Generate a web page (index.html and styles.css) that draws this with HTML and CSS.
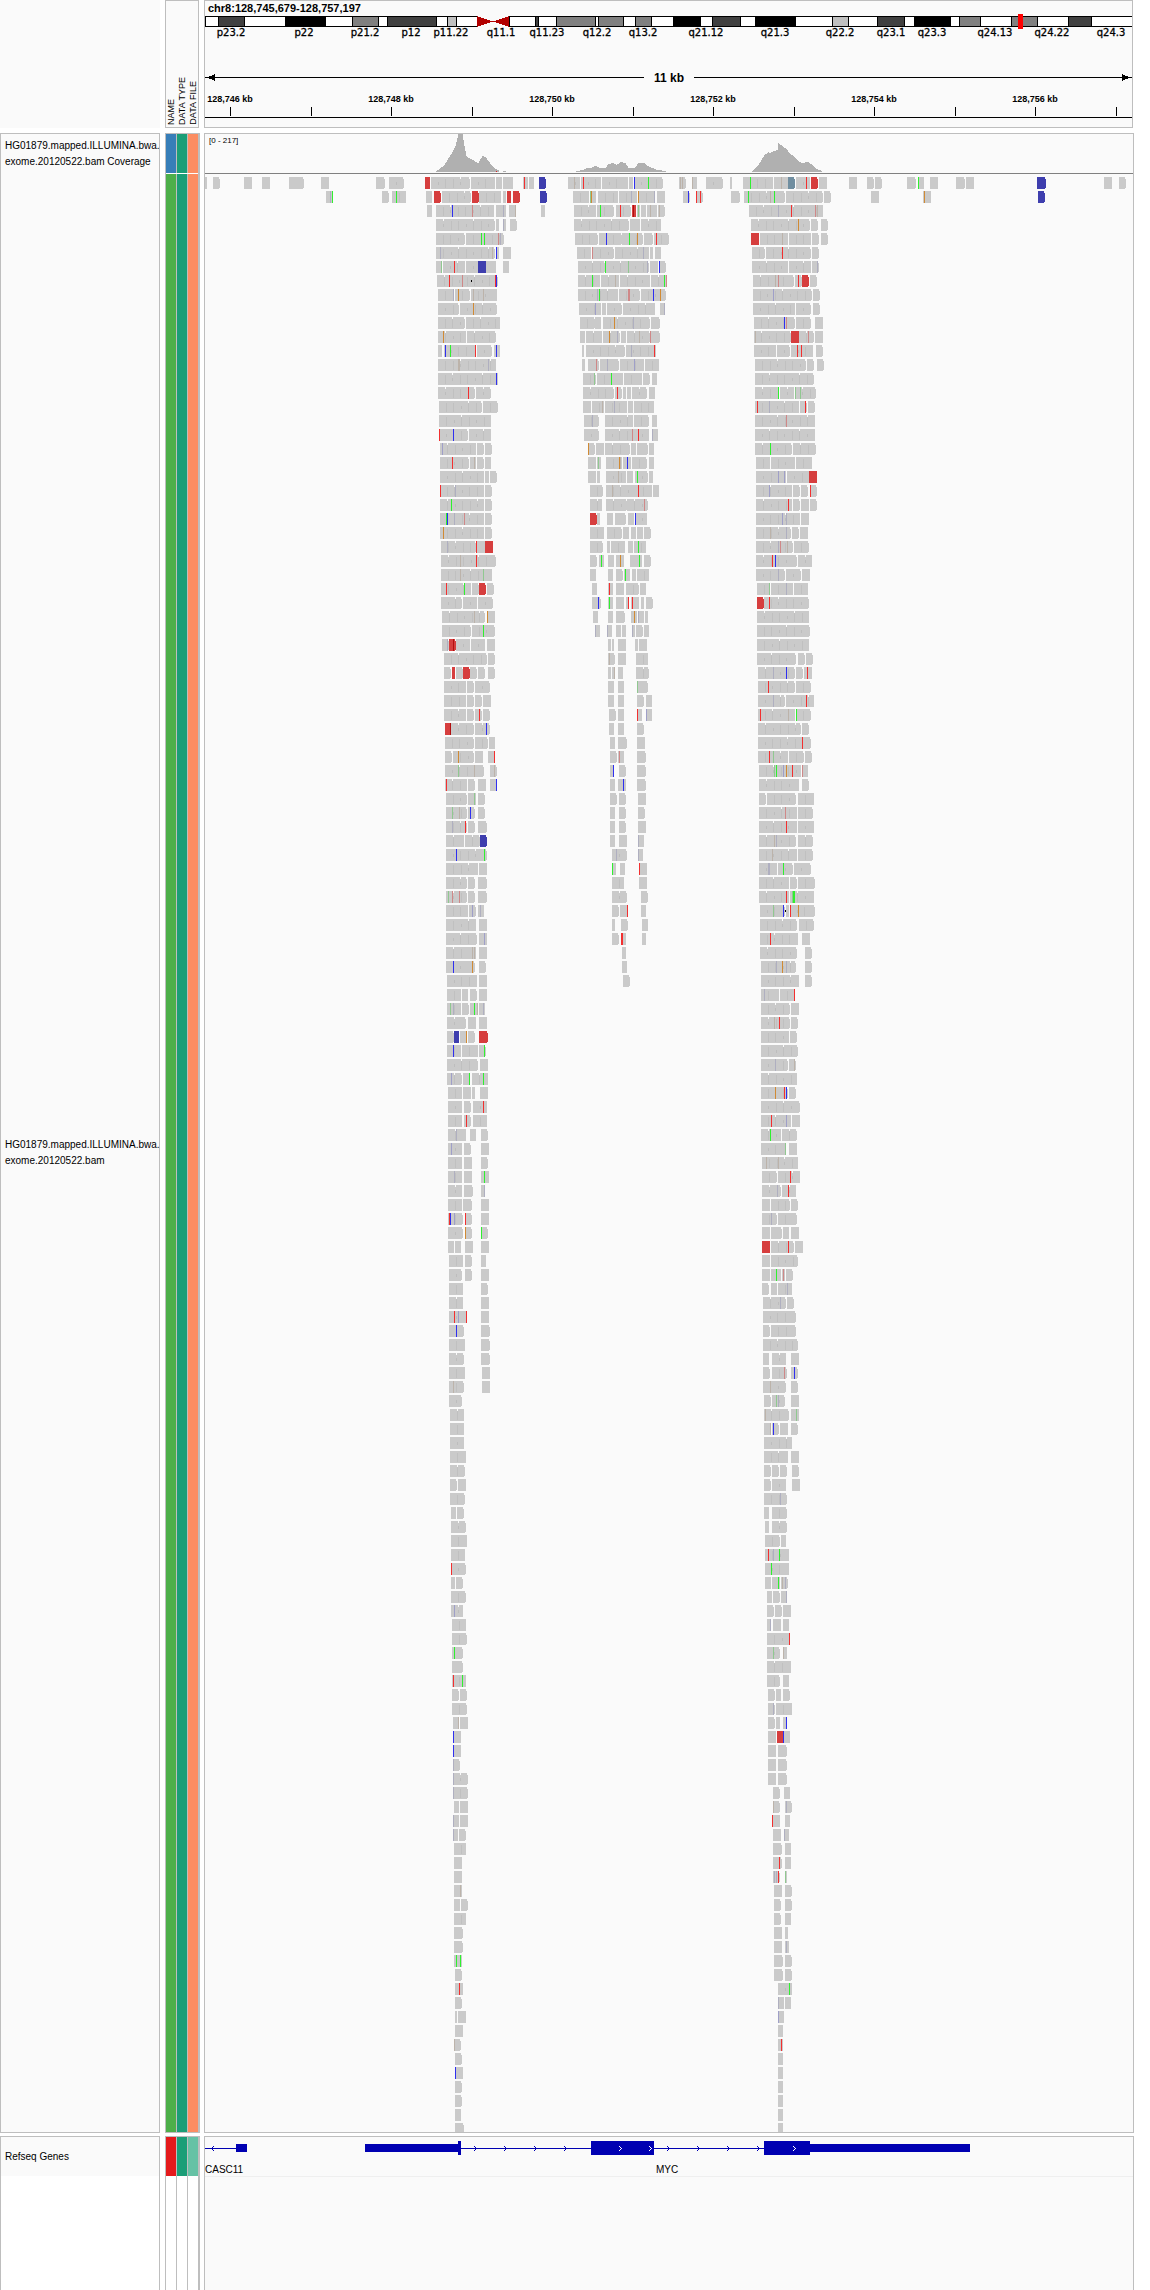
FILE: index.html
```html
<!DOCTYPE html>
<html lang="en">
<head>
<meta charset="utf-8">
<title>chr8:128,745,679-128,757,197</title>
<link rel="stylesheet" href="styles.css">
</head>
<body>
<main class="browser">
  <section class="band band-header">
    <div class="corner"></div>
    <div class="attr-heads">
      <span class="attr-head">NAME</span>
      <span class="attr-head">DATA TYPE</span>
      <span class="attr-head">DATA FILE</span>
    </div>
    <div class="panel header-panel">
      <svg class="canvas header-canvas" id="header" role="img" aria-label="Chromosome 8 ideogram and ruler"></svg>
    </div>
  </section>

  <section class="band band-data">
    <div class="panel names">
      <div class="name coverage-height">HG01879.mapped.ILLUMINA.bwa.<br>exome.20120522.bam Coverage</div>
      <div class="name reads-height">HG01879.mapped.ILLUMINA.bwa.<br>exome.20120522.bam</div>
    </div>
    <div class="attrs">
      <div class="attr-row coverage-height"><i class="swatch blue"></i><i class="swatch teal"></i><i class="swatch coral"></i></div>
      <div class="attr-row reads-height"><i class="swatch green"></i><i class="swatch teal"></i><i class="swatch coral"></i></div>
    </div>
    <div class="panel tracks">
      <svg class="canvas coverage-height" id="coverage" role="img" aria-label="Coverage"></svg>
      <svg class="canvas reads-height" id="reads" role="img" aria-label="Alignments"></svg>
    </div>
  </section>

  <section class="band band-genes">
    <div class="panel names open">
      <div class="name gene-height">Refseq Genes</div>
    </div>
    <div class="attrs open">
      <div class="attr-row gene-height"><i class="swatch red"></i><i class="swatch teal"></i><i class="swatch mint"></i></div>
      <div class="attr-row rest"><i class="swatch"></i><i class="swatch"></i><i class="swatch"></i></div>
    </div>
    <div class="panel tracks open">
      <svg class="canvas gene-height" id="genes" role="img" aria-label="Refseq Genes"></svg>
    </div>
  </section>
</main>
<script src="script.js"></script>
</body>
</html>
```
FILE: styles.css
```css
* { box-sizing: border-box; }

body {
  margin: 0;
  background: #fff;
  color: #000;
  font: 10px/16px "Liberation Sans", Arial, sans-serif;
}

.browser {
  display: flex;
  flex-direction: column;
  min-height: 100vh;
  padding-right: 16px;
}

.band {
  display: grid;
  grid-template-columns: 160px 34px minmax(0, 1fr);
  column-gap: 5px;
}

.band-header { height: 128px; margin-bottom: 5px; padding-right: 1px; }
.band-data { margin-bottom: 3px; }
.band-genes { flex: 1; min-height: 150px; }

.corner { background: #fafafa; }

.panel {
  border: 1px solid #bebebe;
  background: #fafafa;
}

.open { border-bottom: 0; }
.names.open { background: #fff; }

.attr-heads {
  display: flex;
  justify-content: space-around;
  align-items: flex-end;
  padding-bottom: 2px;
  border: 1px solid #bebebe;
  background: #fafafa;
}

.attr-head {
  writing-mode: vertical-rl;
  transform: rotate(180deg);
  font-size: 9px;
  line-height: 10px;
  white-space: nowrap;
}

.coverage-height { height: 40px; }
.reads-height { height: 1958px; }
.gene-height { height: 39px; }

.name {
  display: flex;
  align-items: center;
  padding-left: 4px;
  background: #fafafa;
  white-space: nowrap;
}

.attrs {
  position: relative;
  display: flex;
  flex-direction: column;
  margin-right: -1px;
  border: 1px solid #bebebe;
  border-right-width: 2px;
  background: #bebebe;
}
.attrs.open { border-bottom: 0; }

.attr-row { display: flex; gap: 1px; }
.attr-row.coverage-height { border-bottom: 1px solid #fff; }
.rest { flex: 1; }

.swatch { flex: 1; background: #fff; }
.blue { background: #377eb8; }
.green { background: #4daf4a; }
.teal { background: #1b9e77; }
.coral { background: #fc8d62; }
.red { background: #e41a1c; }
.mint { background: #66c2a5; }

.canvas { display: block; width: 100%; }
.header-canvas { height: 126px; }
#coverage { border-bottom: 1px solid #808080; }
#genes { height: 40px; border-bottom: 1px solid #efefef; }

.locus { font-size: 11px; font-weight: bold; }
.cytoband { font-family: "DejaVu Sans", sans-serif; font-size: 10px; stroke: #000; stroke-width: 0.3px; }
.span-label { font-size: 12px; font-weight: bold; }
.tick-label { font-size: 9px; font-weight: bold; }
.range { font-size: 8px; }
```
FILE: script.js
```js
var NS = 'http://www.w3.org/2000/svg';
var LEFT = 205;

// Each track has a stretched layer for shapes, and text placed by percentage.
function track(id, width, height) {
  var svg = document.getElementById(id);
  var layer = document.createElementNS(NS, 'svg');
  layer.setAttribute('viewBox', LEFT + ' 0 ' + width + ' ' + height);
  layer.setAttribute('preserveAspectRatio', 'none');
  layer.setAttribute('width', '100%');
  layer.setAttribute('height', height);
  layer.setAttribute('shape-rendering', 'crispEdges');
  svg.appendChild(layer);
  return {
    rect: function (x, y, w, h, fill) {
      var r = document.createElementNS(NS, 'rect');
      r.setAttribute('x', x); r.setAttribute('y', y);
      r.setAttribute('width', w); r.setAttribute('height', h);
      r.setAttribute('fill', fill);
      layer.appendChild(r);
    },
    poly: function (points, fill) {
      var p = document.createElementNS(NS, 'polygon');
      p.setAttribute('points', points); p.setAttribute('fill', fill);
      layer.appendChild(p);
    },
    text: function (x, y, label, cls, anchor) {
      var t = document.createElementNS(NS, 'text');
      t.setAttribute('x', ((x - LEFT) / width * 100) + '%');
      t.setAttribute('y', y);
      t.setAttribute('class', cls);
      t.setAttribute('text-anchor', anchor || 'middle');
      t.textContent = label;
      svg.appendChild(t);
    }
  };
}

// Ideogram and ruler
var head = track('header', 927, 126);
head.text(208, 11, 'chr8:128,745,679-128,757,197', 'locus', 'start');
head.rect(205, 15, 927, 11, '#000');
head.rect(206, 16, 926, 9, '#fff');
[[218, 245, '#404040'], [285, 326, '#000'], [352, 379, '#808080'], [387, 437, '#404040'],
 [447, 457, '#c0c0c0'], [535, 539, '#404040'], [556, 596, '#808080'], [598, 624, '#808080'],
 [635, 652, '#808080'], [673, 701, '#000'], [712, 741, '#404040'], [755, 796, '#000'],
 [832, 849, '#c0c0c0'], [877, 905, '#404040'], [914, 951, '#000'], [959, 981, '#808080'],
 [1011, 1038, '#808080'], [1068, 1092, '#404040']].forEach(function (b) {
  head.rect(b[0], 15, b[1] - b[0], 11, '#000');
  head.rect(b[0] + 1, 16, b[1] - b[0] - 2, 9, b[2]);
});
head.rect(477, 15, 33, 11, '#fafafa');
head.poly('477,15 493,20.5 477,26', '#b20000');
head.poly('509,15 493,20.5 509,26', '#b20000');
head.rect(509, 15, 1, 11, '#000');
head.rect(1018, 13, 5, 15, '#f00');
[[231, 'p23.2'], [304, 'p22'], [365, 'p21.2'], [411, 'p12'], [451, 'p11.22'], [501, 'q11.1'],
 [547, 'q11.23'], [597, 'q12.2'], [643, 'q13.2'], [706, 'q21.12'], [775, 'q21.3'], [840, 'q22.2'],
 [891, 'q23.1'], [932, 'q23.3'], [995, 'q24.13'], [1052, 'q24.22'], [1111, 'q24.3']].forEach(function (l) {
  head.text(l[0], 35, l[1], 'cytoband');
});
head.rect(205, 76, 439, 1, '#000');
head.rect(694, 76, 438, 1, '#000');
head.poly('207,76.5 215,73 215,80', '#000');
head.poly('1130,76.5 1122,73 1122,80', '#000');
head.text(669, 81, '11 kb', 'span-label');
[230, 311, 391, 472, 552, 633, 713, 794, 874, 955, 1035, 1116].forEach(function (x, i) {
  head.rect(x, 106, 1, 9, '#000');
  if (i % 2 === 0) head.text(x, 101, '128,' + (746 + i) + ' kb', 'tick-label');
});
head.rect(205, 116, 927, 1, '#000');

// Coverage
var cov = track('coverage', 928, 39);
cov.text(209, 9, '[0 - 217]', 'range', 'start');
['436,37 440,34 444,31 448,24 452,18 455,12 457,4 458,0 462,0 464,12 466,22 468,24 471,25 474,27 478,29 480,25 482,22 485,23 488,27 491,31 494,34 499,37',
 '576,37 582,36 586,34 590,34 595,32 600,34 605,34 608,30 613,29 616,31 620,28 625,29 628,34 634,34 638,29 644,29 647,32 652,34 657,36 666,37',
 '752,37 757,32 761,26 764,21 768,18 770,19 773,17 777,16 778,9 782,12 786,15 789,19 793,22 797,26 801,29 808,28 812,31 816,35 822,37'].forEach(function (s) {
  var pts = s.split(' ').map(function (p) { return p.split(',').map(Number); });
  for (var i = 1; i < pts.length; i++) {
    var a = pts[i - 1], b = pts[i];
    for (var x = a[0]; x < b[0]; x++) {
      var y = Math.round(a[1] + (b[1] - a[1]) * (x - a[0]) / (b[0] - a[0]));
      cov.rect(x, y, 1, 38 - y, '#b0b0b0');
    }
  }
});
cov.rect(496, 37, 1, 1, '#e02020');
cov.rect(503, 37, 3, 1, '#b0b0b0');

// Alignments. Blocks are "start-end" with an optional colour; a letter before a number is a mismatch.
var BLOCK = { R: '#d63e3e', B: '#3e3eae', S: '#708ea0' };
var MARK = { r: '#f23030', d: '#b01010', g: '#30f030', G: '#90c890', b: '#3030f0', B: '#9f9fc8',
  o: '#d08a34', t: '#bcb3aa', p: '#cf8888', l: '#afafc0', k: '#000' };
var READS = [
{ row: 0, x: 205, rows: `0-2 8-15 39-47 57-65 84-92 92-99 116-124 171-180 184-199
121-127 127-128 177-184 187-201 l125 g127 g191` },
{ row: 0, x: 420, rows: `5-10R 11-50 51-75 76-82 83-93 103-108 109-114 119-126B r104
6-12 14-21R 22-51 52-59R 59-81 83-86 87-91R 93-100R 120-127B
7-12 16-74 76-86 89-96 121-125 b32 p52 l83 t95
16-75 76-79 83-86 90-97 l83
16-45 46-64 65-84 g61 g64 p78 l80
16-75 76-79 83-91 l20 t72 b76
16-22 23-45 46-58 58-66B 66-76 83-89 G21 r34
17-78 r29 p42 k51 r75 b76
18-34 35-50 51-77 l33 o38 t53 t63
18-39 40-77 o53
18-45 46-80
18-46 47-76 o23
18-22 24-56 57-72 74-80 b25 g30 r55 b76
18-76 t38 t39 l68
18-78 b76
18-55 56-71 r48
19-62 63-78
19-71
19-48 49-71 r19 b33
20-56 57-64 65-72 B22
20-49 50-56 57-64 65-71 r32 t54
20-64 65-69 70-77
20-64 65-72 r20 l35
20-64 65-72 g31
20-64 65-72 g26 b27 l34 p44
20-64 65-72 o23
21-56 57-65 65-73R l27 r56
21-76 t40 r56
21-64 64-72 t40 G63
21-51 52-59 59-66R 67-74 r26 g44
21-42 43-57 58-73
22-65 67-75 t54 o67
22-51 52-75 g63
22-29 29-36R 36-50 51-65 67-75 l27 d33
24-67 68-75
24-31 32-35R 36-43 43-50R 50-57 58-65 68-75
24-46 47-54 55-70
24-46 47-54 55-62 63-71
24-46 47-54 55-62 63-70 r59
25-31R 31-54 55-70 d30 b66
25-54 55-68 69-75
25-32 33-54 55-63 68-75 o38 r74
25-64 70-77 G38 t54 t74
25-47 48-55 58-66 70-77 r26 b76
26-47 48-56 58-65 G54
26-47 48-55 58-65 G32 t39 b50
26-47 48-55 58-67 l32 r45
26-44 45-60 60-67B
26-67 b36 g64
26-58 59-67
26-47 48-55 58-67
26-47 48-55 58-67 G28 p32 p39
26-48 49-56 58-64 B52 l60
26-56 59-67
26-57 59-67 B64
26-48 48-56 59-67 t52 t54
26-48 48-55 59-66 b33 o52` },
{ row: 57, x: 430, rows: `17-47 49-57
17-31 32-38 40-47 49-57
17-31 32-39 40-48 49-55 G20 l23 g44 t47 l53
17-36 38-46 49-57
17-24 24-29B 30-37 38-45 49-58R o36
17-31 32-48 49-56 b23 g54
17-48 50-58
17-32 33-40 42-58 B21 g39 g53
18-32 33-41 42-45 50-58
18-32 34-41 43-57 r53
18-32 34-41 43-57 r36
18-36 40-46 51-58 l26
18-32 34-41 51-59 B21
18-32 34-42 51-58
18-32 34-42 51-59 l24 g54
18-32 34-43 51-55 l54
18-32 33-42 51-59
18-33 35-42 51-59 r19 b20 B24 r35
18-33 35-42 51-58 o35 g51
18-24 25-31 35-43 51-59
19-33 35-42 51-56
19-32 35-42 51-59
19-33 51-58
19-33 51-59
19-37 51-59 r24 B28 r36
19-34 51-60 b26
19-35 51-60
19-34 51-60
19-35 52-60
19-34 52-60 t23
19-32
20-34
20-34
20-34
20-36
20-35
20-27 28-36
20-35
21-26 27-34
21-36
21-37
21-35` },
{ row: 99, x: 440, rows: `11-26 r11
11-15 16-23
11-26
11-23 B14
12-26
12-27
12-23 g14
12-23
12-26 r13 g22
12-19 20-27
12-27
13-19 20-28 t18
13-21 b13
13-21 b13
13-20 l13
13-28 l13
13-28 l13
14-19 20-28
13-19 20-28 l13
13-18 19-26 l13
14-26
14-22
14-22
14-22 t20
14-20 21-28
14-26
14-23
14-23
14-22 g16 g20
15-22
15-23 r19
15-22
15-17 18-26
15-23
14-21 t14
15-22
15-23 b15
15-22
15-22
15-21
15-24` },
{ row: 0, x: 420, rows: `148-160 161-181 182-208 209-213 214-243 t154 r163 b214 g228
153-169 170-176 178-198 199-217 219-235 237-245 G170 o171 l211 o218 l234
154-176 177-194 196-211 212-216R 217-220 221-226 227-237 238-245 g180 r200 d213 G218 t230 t239
154-209 210-220 221-241
155-178 179-202 202-223 224-233 234-249 b186 g209 o217 r236
157-171 173-194 195-229 230-233 235-241 p172 l223
158-185 186-229 230-238 239-246 g185 G208 l227 b239
158-180 181-199 200-230 231-247 g172 t195 g244 p246
158-198 199-220 221-246 l177 g179 p208 p209 b233 o240
159-181 182-186 187-202 203-235 240-245 B175 l244
160-175 175-181 183-230 231-240 o194 l213
160-165 166-182 183-200 201-206 207-230 231-240 o189 l197 t219 p230
162-164 166-205 206-236 l211 r234
162-165 168-179 180-199 200-224 225-239 p176 l187 B214
163-176 177-203 204-222 223-230 232-237 G174 g191
163-194 195-202 203-206 207-211 212-227 229-235 r197
163-171 172-184 185-207 208-213 214-234 t182 l194
164-179 185-213 214-229 232-237 l172
164-179 185-215 215-229 232-238 p212 r218 l232
168-175 176-184 185-210 211-216 217-228 229-234 o168
168-176 177-181 186-202 203-211 212-227 229-234 G178 o199 t200 b207
168-176 177-180 186-206 207-213 215-228 229-233 t198 g217
170-183 186-216 216-232 233-239 t192 r218
170-182 186-207 207-228 p224
170-177R 177-180 187-193 195-206 208-214 215-227 b215
170-184 187-202 203-209 211-216 217-223 224-231
170-183 187-190 191-205 208-213 214-226 g218
170-177 179-184 188-194 196-204 210-214 214-222 224-231 g181 o200 g219
170-176 188-193 196-203 204-210 212-216 217-229 g205
172-177 188-193 196-204 206-219 220-226 r189
172-181 188-193 196-204 206-209 211-219 221-224 226-233 b178 g189 r208 r212
173-178 188-193 196-205 211-217 218-224 225-228 o214 l218
175-180 187-192 196-201 202-206 212-215 216-223 224-229 l175 l187 l212
188-191 192-194 198-206 215-218 219-227
188-195 198-206 216-228 t189
188-191 192-195 198-203 216-229 t194
188-194 198-204 217-228 G217
188-194 198-204 217-224 226-232
189-196 198-204 217-222 226-232 r217 B226
189-194 198-204 217-224
190-195 198-207 217-225
190-197 198-204 217-226 p199
190-194 199-206 217-226 b193
190-195 198-206 217-226 b203
190-197 199-206 218-226
190-195 199-206 218-225
190-195 199-206 218-226
190-195 199-207 218-224 l218
192-207 218-223 l196 l218
192-196 200-205 219-227 g192 r219
192-204 219-227
192-207 221-228
192-199 200-208 221-226 r207
192-195 201-208 222-228
192-199 201-206 222-226 r201 r202
202-206
202-207
203-210` },
{ row: 0, x: 670, rows: `9-16 22-27 36-53 60-62 73-103 104-118 118-125S 126-140 141-148R 149-157 179-187 197-204 205-212 237-246 248-254 260-268 286-295 296-304 367-376B 434-442 449-456 t10 t12 t22 g80 t111 r136 g248
13-20 26-33 61-70 74-115 116-153 154-161 201-209 253-261 368-375B b18 r26 r30 g78 t100 g104 o254
79-153 l108 r121 p145 t147
81-140 141-148 151-158 o128
81-89R 90-118 119-141 142-149 151-158 t112
82-95 96-141 142-149 r112
82-118 119-141 142-149 l147
83-124 125-132 132-139R 140-147 t105 p108 r128
83-142 143-150 B103
83-125 126-141 143-150
84-125 126-141 145-153 b114 p116
84-121 121-129R 129-144 145-153 t85 p138
84-106 107-120 121-143 146-153 r127 r131
85-136 137-144 147-154
85-144
85-109 110-124 125-146 g108 G125 G130
85-129 130-137 138-145 r87 l99 r135
85-145 p116
85-145
85-122 123-146 g100
86-100 101-125 126-142
86-116 117-139 139-147R B108 B114
86-122 123-130 131-138 140-147 B99 r140
86-122 123-130 131-139 140-147 r118
86-130 131-139 B112 l116
86-121 122-129 130-138 t100 l116
86-123 124-139 l108 p110 t117
86-127 128-142 r102 b105` },
{ row: 28, x: 720, rows: `36-65 66-81 82-90 l58
37-50 51-73 74-88 G49 l66
37-44R 44-89 r49
37-89
37-90
37-89
37-76 78-85 86-93
38-75 76-83 84-92 l53 b66 r87
38-75 76-91 r48
38-65 66-94 l53 r86
38-68 69-75 76-91 r40 t68 g76
38-81 82-89
38-91 r82
38-68 69-84 85-92 r49 G53
39-81 82-88 G54 g56 B63 o66 r72 p82
39-79 82-89
39-46 47-76 78-94
39-77 78-93 p65
39-77 78-94 r66
39-76 78-93 t54 l56
39-77 78-93 t52
39-57 58-73 74-91 l48 l49 g63
39-69 70-77 78-95
39-69 70-94 r66 G72 g73 g74
40-65 66-69 70-95 G53 b63 k65 r70 o78
40-77 79-94
40-78 82-90 r50
40-77 85-92
41-76 85-92 l56 o62 l66` },
{ row: 57, x: 740, rows: `21-59 65-72
21-39 40-55 l24 r54
21-50 51-59
21-50 51-58 t34 r39
21-49 50-57
21-58
21-48 49-56 l35 t54
21-57
21-48 49-56 o35 r44 b46
21-60
21-51 52-60 r31 B46
21-41 42-57 g30
21-46 49-57 G45
22-58 t26 t38
22-37 38-60 r50
22-41 42-56 l37 r48
22-30 31-50 51-58
22-37 38-57 l31
22-30 31-42 43-49 51-59
22-30R 31-54 55-63 r48
22-30 31-58
22-30 31-41 42-45 46-53 g36 p43
22-29 31-37 38-52 l47
23-46 47-54 l40
23-56
23-30 31-56
23-58
23-29 32-46 51-59
23-30 32-47 51-58 p44 b54
23-46 51-58 t30
24-31 32-45 51-59 G36 l38
24-49 51-59 t25 G56
24-31 32-39 40-48 51-58 t30 b33
24-52
24-48 51-59
24-31 32-39 40-47 52-59
24-31 32-46 52-60
24-47 l40
24-29 32-47
25-29 32-47
25-40 41-46
25-49 r28 l33 g39` },
{ row: 99, x: 440, rows: `325-349 g331
325-331 332-340 341-348 g338 t342 l345
327-332 333-340 341-347 l346
327-334 335-342 343-351
327-331 333-341 343-349 l330
327-350 r349
327-340 343-347 G333 t343
327-351
327-340 343-349
328-335 336-341 343-350
328-335 336-352 l333
328-335 336-340 343-347 b346
328-336 337-343R 344-350 b343
328-336 338-347
328-336 338-347
328-336 338-347
333-340 344-350
333-340 345-352 t333 l346
332-340 345-350 r332
333-341 344-349 l344
333-342 345-351
333-342 345-351 r339
333-340 345-347 l334 l336 r338 G345
334-342 345-352
334-341 345-352
334-341 345-351
334-342 345-348
334-342 345-349 l346
334-343 345-352
334-343 345-352
338-352 g349
338-344 345-351 l338
338-344 B338
338-343
338-343 r341
338-343
338-343
338-343
338-343
338-343
338-343` }];

var reads = track('reads', 928, 1958);
READS.forEach(function (block) {
  block.rows.split('\n').forEach(function (line, i) {
    var y = 3 + (block.row + i) * 14;
    line.trim().split(' ').forEach(function (item) {
      var seg = /^(\d+)-(\d+)([A-Z]?)$/.exec(item);
      if (!seg) {
        var dot = item[0] === 'k';
        reads.rect(block.x + Number(item.slice(1)), dot ? y + 5 : y, 1, dot ? 2 : 12, MARK[item[0]]);
        return;
      }
      var a = block.x + Number(seg[1]), b = block.x + Number(seg[2]);
      var fill = BLOCK[seg[3]] || '#cacaca';
      var tip = b - a > 6 && (a + b) % 2 ? 1 : 0;
      reads.rect(a, y, b - a - tip, 12, fill);
      if (tip) reads.rect(b - 1, y + 2, 1, 9, fill);
      if (seg[3]) return;
      // Read ends inside a packed run of blocks
      for (var x = a + 7, n = i; x < b - 4; x += 7 + n % 2, n++) {
        if (n % 3 === 0) reads.rect(x, y + 5, 1, 3, '#bdbdbd');
        else reads.rect(x, y + 2, 1, 9, '#c0c0c0');
        if (n % 4 === 3) reads.rect(x, y, 1, 2, '#fafafa');
      }
    });
  });
});

// Genes
var genes = track('genes', 928, 39);
var NAVY = '#0000b2';
function chevron(x, dir, fill) {
  [-2, -1, 0, 1, 2].forEach(function (d) {
    genes.rect(x + dir * (1 - Math.abs(d)), 11 + d, 1, 1, fill);
  });
}
genes.rect(205, 11, 31, 1, NAVY);
genes.rect(236, 7, 11, 8, NAVY);
genes.rect(365, 7, 94, 8, NAVY);
genes.rect(458, 4, 3, 14, NAVY);
genes.rect(461, 11, 303, 1, NAVY);
genes.rect(591, 4, 63, 14, NAVY);
genes.rect(764, 4, 46, 14, NAVY);
genes.rect(810, 7, 160, 8, NAVY);
chevron(212, -1, NAVY);
[475, 505, 535, 565, 668, 698, 728, 758].forEach(function (x) { chevron(x, 1, NAVY); });
[620, 650, 794].forEach(function (x) { chevron(x, 1, '#fff'); });
genes.text(205, 36, 'CASC11', 'gene', 'start');
genes.text(667, 36, 'MYC', 'gene');
```
